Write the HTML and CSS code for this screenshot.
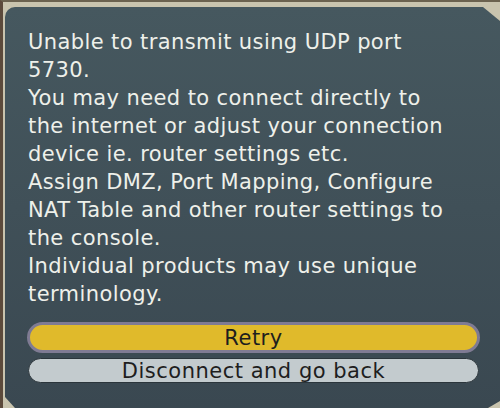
FILE: index.html
```html
<!DOCTYPE html>
<html lang="en">
<head>
  <meta charset="utf-8">
  <title>Connection Error</title>
  <link rel="stylesheet" href="styles.css">
</head>
<body>
  <div class="frame">
    <div class="panel">
      <p class="message">
        <span>Unable to transmit using UDP port</span>
        <span>5730.</span>
        <span>You may need to connect directly to</span>
        <span>the internet or adjust your connection</span>
        <span>device ie. router settings etc.</span>
        <span>Assign DMZ, Port Mapping, Configure</span>
        <span>NAT Table and other router settings to</span>
        <span>the console.</span>
        <span>Individual products may use unique</span>
        <span>terminology.</span>
      </p>
      <div class="actions">
        <button class="btn btn-selected">Retry</button>
        <button class="btn">Disconnect and go back</button>
      </div>
    </div>
  </div>
</body>
</html>
```

FILE: styles.css
```css
:root {
  --frame: #c9c4ae;
  --panel-top: #46585f;
  --panel-bottom: #3a4851;
  --text: #eef0ea;
  --yellow: #e0ba2b;
  --grey-btn: #c3cbce;
}
* { box-sizing: border-box; margin: 0; padding: 0; }
body {
  background: #5c4a3b;
  font-family: 'DejaVu Sans', sans-serif;
}
.frame {
  width: 500px;
  height: 408px;
  background: var(--frame);
  border-top: 2px solid #6b624f;
  border-left: 3px solid #5c4a3b;
  padding: 5px 0 0 2px;
}
/* dark panel with cut corners */
.panel {
  width: 495px;
  height: 401px;
  background: linear-gradient(var(--panel-top), var(--panel-bottom));
  border-top-left-radius: 10px;
  clip-path: polygon(0 0, 478px 0, 495px 14px, 495px 394px, 483px 401px, 10px 401px, 0 390px);
  padding: 21px 20px 0 22px;
}
.message {
  color: var(--text);
  font-size: 21px;
  line-height: 28px;
  letter-spacing: 0.4px;
  margin-left: 1px;
  white-space: nowrap;
}
.message span { display: block; }
.actions {
  display: flex;
  flex-direction: column;
  gap: 5px;
  margin-top: 14px;
}
.btn {
  font-family: 'DejaVu Sans', sans-serif;
  font-size: 21px;
  color: #1e1e1e;
  background: var(--grey-btn);
  border: 1px solid #2b353b;
  border-radius: 13px;
  height: 25px;
  width: 451px;
  margin-left: 1px;
  line-height: 22px;
  letter-spacing: 0.5px;
}
.btn-selected {
  background: var(--yellow);
  border: 3px solid #7f7b93;
  border-radius: 16px;
  height: 31px;
  width: 453px;
  margin-left: 0;
}
```
